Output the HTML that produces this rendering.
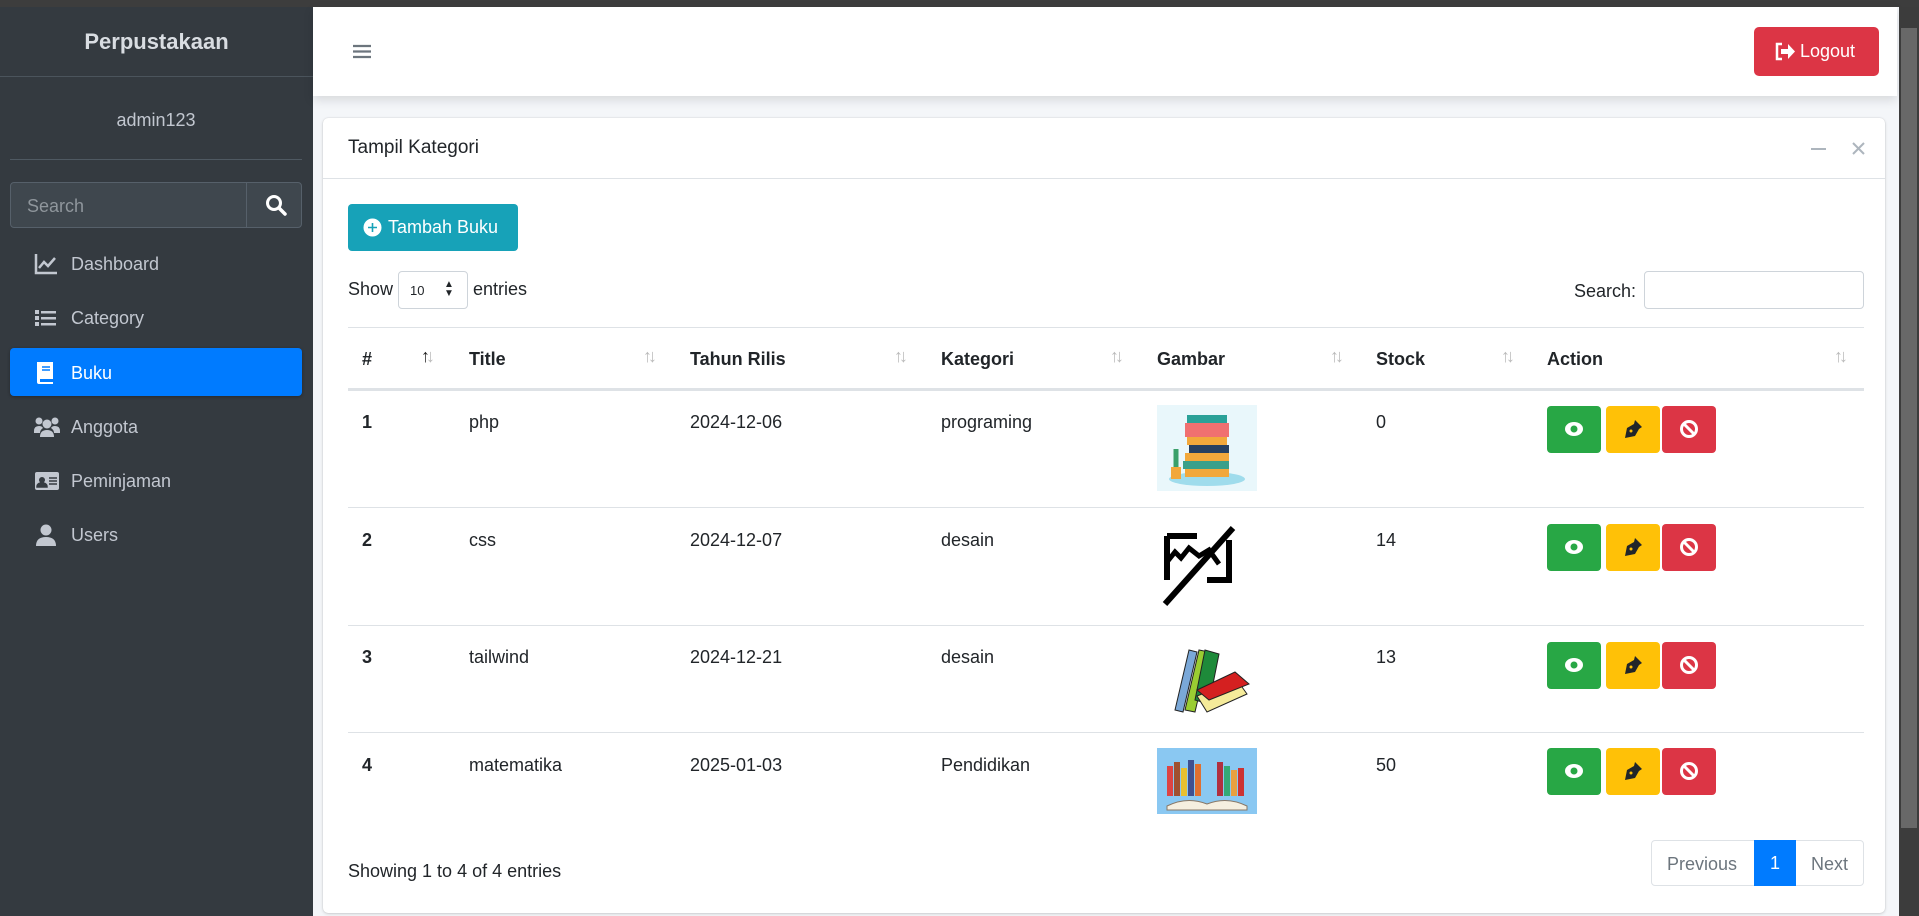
<!DOCTYPE html>
<html><head><meta charset="utf-8"><style>
*{box-sizing:border-box;margin:0;padding:0}
body{width:1919px;height:916px;overflow:hidden;background:#f4f6f9;font-family:"Liberation Sans",sans-serif;font-size:18px;color:#212529;position:relative}
.abs{position:absolute}
.topbar{left:0;top:0;width:1919px;height:7px;background:#3d3d3d}
.side{left:0;top:7px;width:313px;height:909px;background:#343a40;color:#c2c7d0}
.brand{position:absolute;left:0;top:0;width:313px;height:70px;border-bottom:1px solid #4b545c;text-align:center;line-height:70px;font-weight:bold;font-size:22px;color:#d9dde2}
.user{position:absolute;left:10px;top:78px;width:292px;height:75px;border-bottom:1px solid #4f5962;text-align:center;line-height:70px;font-size:18px;color:#c2c7d0}
.search{position:absolute;left:10px;top:175px;width:292px;height:46px;border:1px solid #56606a;border-radius:4px;background:#3f474e}
.search span{position:absolute;left:16px;top:13px;color:#8f969c}
.search .b{position:absolute;left:235px;top:0;width:1px;height:44px;background:#56606a}
.nav{position:absolute;left:10px;width:292px;height:48px;border-radius:4px;color:#c2c7d0;font-size:18px}
.nav svg{position:absolute;left:24px;top:14px}
.nav span{position:absolute;left:61px;top:15px}
.nav.act{background:#007bff;color:#fff;box-shadow:0 1px 3px rgba(0,0,0,.3)}
.header{left:313px;top:7px;width:1584px;height:89px;background:#fff;box-shadow:0 4px 10px rgba(0,0,0,.12)}
.logout{position:absolute;left:1441px;top:20px;width:125px;height:49px;background:#dc3545;border-radius:5px;color:#fff;font-size:18px;line-height:49px;padding-left:46px}
.scroll{left:1899px;top:7px;width:20px;height:909px;background:#3c3c3c}
.card{left:323px;top:118px;width:1562px;height:795px;background:#fff;border-radius:5px;box-shadow:0 0 1px rgba(0,0,0,.2),0 1px 3px rgba(0,0,0,.15)}
.ch{position:absolute;left:0;top:0;width:100%;height:61px;border-bottom:1px solid #dee2e6}
.btn-t{left:348px;top:204px;width:170px;height:47px;background:#17a2b8;border-radius:4px;color:#fff;line-height:47px;padding-left:40px}
.th{position:absolute;top:349px;font-weight:bold;font-size:18px}
.arr{position:absolute;top:346px;color:#bbb;font-size:18px;font-weight:bold;letter-spacing:-4px}
.td{position:absolute;font-size:18px}
.hl{position:absolute;left:348px;width:1516px;height:1px;background:#dee2e6}
.ab{position:absolute;width:54px;height:47px;border-radius:4px}
.ab svg{position:absolute;left:17px;top:13px}
</style></head><body>
<div class="abs topbar"></div>
<div class="abs side">
 <div class="brand">Perpustakaan</div>
 <div class="user">admin123</div>
 <div class="search"><span>Search</span><div class="b"></div>
  <svg style="position:absolute;left:254px;top:11px" width="22" height="22" viewBox="0 0 22 22"><circle cx="9" cy="9" r="6.5" fill="none" stroke="#fff" stroke-width="3"/><path d="M14 14l6 6" stroke="#fff" stroke-width="3.5" stroke-linecap="round"/></svg></div>
 <div class="nav" style="top:232px"><svg width="24" height="22"><path d="M2 1v19h21" fill="none" stroke="#c2c7d0" stroke-width="2.5"/><path d="M5 15l5-6 4 4 7-8" fill="none" stroke="#c2c7d0" stroke-width="2.5"/></svg><span>Dashboard</span></div>
 <div class="nav" style="top:286px"><svg width="24" height="22"><g fill="#c2c7d0"><rect x="1" y="3" width="4" height="4"/><rect x="1" y="9" width="4" height="4"/><rect x="1" y="15" width="4" height="4"/><rect x="7" y="4" width="15" height="2.5"/><rect x="7" y="10" width="15" height="2.5"/><rect x="7" y="16" width="15" height="2.5"/></g></svg><span>Category</span></div>
 <div class="nav act" style="top:341px"><svg width="24" height="22"><path d="M3 0h16v17H6v3h13v2H5a2 2 0 0 1-2-2z" fill="#fff"/><path d="M8 5h8M8 8h8" stroke="#007bff" stroke-width="1.5"/></svg><span>Buku</span></div>
 <div class="nav" style="top:395px"><svg width="26" height="22"><g fill="#c2c7d0"><circle cx="5" cy="5" r="3.5"/><circle cx="21" cy="5" r="3.5"/><circle cx="13" cy="8" r="4.5"/><path d="M0 15q0-5 5-5 3 0 4 2-3 2-3 5H0zM26 15q0-5-5-5-3 0-4 2 3 2 3 5h6zM6 21q0-7 7-7t7 7z"/></g></svg><span>Anggota</span></div>
 <div class="nav" style="top:449px"><svg width="26" height="22"><rect x="1" y="2" width="24" height="18" rx="2" fill="#c2c7d0"/><circle cx="8" cy="10" r="3" fill="#343a40"/><path d="M3 17q0-4 5-4t5 4z M15 8h8M15 11h8M15 14h8" fill="#343a40" stroke="#343a40" stroke-width="1.5"/></svg><span>Peminjaman</span></div>
 <div class="nav" style="top:503px"><svg width="24" height="22"><circle cx="12" cy="6" r="5.5" fill="#c2c7d0"/><path d="M2 22q0-9 10-9t10 9z" fill="#c2c7d0"/></svg><span>Users</span></div>
</div>
<div class="abs header">
 <svg style="position:absolute;left:40px;top:37px" width="18" height="15"><path d="M0 2h18M0 7.5h18M0 13h18" stroke="#6c757d" stroke-width="2.2"/></svg>
 <div class="logout"><svg style="position:absolute;left:20px;top:15px" width="22" height="19"><path d="M8 2H3v15h5" fill="none" stroke="#fff" stroke-width="2.5"/><path d="M7 7h7V2l7 7.5-7 7.5v-5H7z" fill="#fff"/></svg>Logout</div>
</div>
<div class="abs scroll"><div style="position:absolute;left:2px;top:21px;width:16px;height:800px;background:#686868"></div></div>
<div class="abs card">
 <div class="ch"><span style="position:absolute;left:25px;top:19px;font-size:19px">Tampil Kategori</span>
  <div style="position:absolute;left:1488px;top:30px;width:15px;height:2px;background:#adb5bd"></div>
  <svg style="position:absolute;left:1529px;top:24px" width="13" height="13"><path d="M1 1l11 11M12 1L1 12" stroke="#adb5bd" stroke-width="2"/></svg></div>
</div>
<div class="abs btn-t"><svg style="position:absolute;left:15px;top:14px" width="19" height="19"><circle cx="9.5" cy="9.5" r="9" fill="#fff"/><path d="M9.5 5v9M5 9.5h9" stroke="#17a2b8" stroke-width="1.6"/></svg>Tambah Buku</div>
<div class="abs" style="left:348px;top:279px">Show</div>
<div class="abs" style="left:398px;top:271px;width:70px;height:38px;border:1px solid #ced4da;border-radius:4px;background:#fff;font-size:13px;padding:11px 0 0 11px">10<span style="position:absolute;left:45px;top:8px;font-size:10px;line-height:9px">▲<br>▼</span></div>
<div class="abs" style="left:473px;top:279px">entries</div>
<div class="abs" style="left:1574px;top:281px">Search:</div>
<div class="abs" style="left:1644px;top:271px;width:220px;height:38px;border:1px solid #ced4da;border-radius:4px;background:#fff"></div>
<div class="hl" style="top:327px"></div>
<div class="th" style="left:362px">#</div><div class="arr" style="left:421px;color:#222">↑<span style="color:#bbb">↓</span></div>
<div class="th" style="left:469px">Title</div><div class="arr" style="left:643px">↑↓</div>
<div class="th" style="left:690px">Tahun Rilis</div><div class="arr" style="left:894px">↑↓</div>
<div class="th" style="left:941px">Kategori</div><div class="arr" style="left:1110px">↑↓</div>
<div class="th" style="left:1157px">Gambar</div><div class="arr" style="left:1330px">↑↓</div>
<div class="th" style="left:1376px">Stock</div><div class="arr" style="left:1501px">↑↓</div>
<div class="th" style="left:1547px">Action</div><div class="arr" style="left:1834px">↑↓</div>
<div class="hl" style="top:388px;height:3px"></div>

<div class="td" style="left:362px;top:412px;font-weight:bold">1</div><div class="td" style="left:469px;top:412px">php</div><div class="td" style="left:690px;top:412px">2024-12-06</div><div class="td" style="left:941px;top:412px">programing</div><div class="td" style="left:1376px;top:412px">0</div>
<div class="hl" style="top:507px"></div>
<div class="td" style="left:362px;top:530px;font-weight:bold">2</div><div class="td" style="left:469px;top:530px">css</div><div class="td" style="left:690px;top:530px">2024-12-07</div><div class="td" style="left:941px;top:530px">desain</div><div class="td" style="left:1376px;top:530px">14</div>
<div class="hl" style="top:625px"></div>
<div class="td" style="left:362px;top:647px;font-weight:bold">3</div><div class="td" style="left:469px;top:647px">tailwind</div><div class="td" style="left:690px;top:647px">2024-12-21</div><div class="td" style="left:941px;top:647px">desain</div><div class="td" style="left:1376px;top:647px">13</div>
<div class="hl" style="top:732px"></div>
<div class="td" style="left:362px;top:755px;font-weight:bold">4</div><div class="td" style="left:469px;top:755px">matematika</div><div class="td" style="left:690px;top:755px">2025-01-03</div><div class="td" style="left:941px;top:755px">Pendidikan</div><div class="td" style="left:1376px;top:755px">50</div>

<svg class="abs" style="left:1157px;top:405px" width="100" height="86"><rect width="100" height="86" fill="#e9f7fb"/><ellipse cx="50" cy="74" rx="38" ry="7" fill="#9fdcec"/><rect x="30" y="10" width="40" height="8" fill="#2aa198"/><rect x="28" y="18" width="44" height="14" fill="#f07070"/><rect x="30" y="32" width="40" height="8" fill="#f2a83b"/><rect x="32" y="40" width="40" height="8" fill="#274060"/><rect x="28" y="48" width="44" height="8" fill="#f2a83b"/><rect x="26" y="56" width="46" height="8" fill="#3aa08a"/><rect x="28" y="64" width="44" height="8" fill="#f2a83b"/><rect x="14" y="62" width="10" height="12" fill="#f2a83b"/><path d="M19 62v-18" stroke="#3aa06a" stroke-width="5"/></svg>
<svg class="abs" style="left:1157px;top:524px" width="100" height="86"><path d="M10 12h30M10 12v44M50 56h22V16" fill="none" stroke="#000" stroke-width="6"/><path d="M10 38l8-10 6 6 8-10 10 8 10-6 10 14" fill="none" stroke="#000" stroke-width="5"/><path d="M76 4L8 80" stroke="#000" stroke-width="6"/></svg>
<svg class="abs" style="left:1157px;top:640px" width="100" height="80"><path d="M18 70l14-60 8 2-14 60z" fill="#7aa8d8" stroke="#222"/><path d="M28 70l14-60 10 2-14 60z" fill="#9acd32" stroke="#222"/><path d="M38 60l10-50 14 4-10 50z" fill="#1e8a3a" stroke="#222"/><path d="M40 56l40-16 10 14-40 18z" fill="#f5eb9a" stroke="#222"/><path d="M40 50l38-18 14 12-40 16z" fill="#d42020" stroke="#222"/></svg>
<svg class="abs" style="left:1157px;top:748px" width="100" height="66"><rect width="100" height="66" fill="#8ac8f2"/><g><rect x="10" y="18" width="6" height="30" fill="#d44"/><rect x="17" y="14" width="6" height="34" fill="#a05030"/><rect x="24" y="20" width="6" height="28" fill="#e8c030"/><rect x="31" y="12" width="6" height="36" fill="#405090"/><rect x="38" y="16" width="6" height="32" fill="#e07030"/><rect x="60" y="14" width="6" height="34" fill="#b03040"/><rect x="67" y="18" width="6" height="30" fill="#3a7"/><rect x="74" y="22" width="6" height="26" fill="#e8a040"/><rect x="81" y="20" width="6" height="28" fill="#c33"/></g><path d="M10 58q20-10 40-2 20-8 40 2v4H10z" fill="#f5efe0" stroke="#876"/></svg>

<div class="ab" style="left:1547px;top:406px;background:#28a745"><svg width="20" height="20"><ellipse cx="10" cy="10" rx="9" ry="7" fill="#fff"/><circle cx="10" cy="10" r="3.5" fill="#28a745"/></svg></div>
<div class="ab" style="left:1606px;top:406px;background:#ffc107"><svg width="20" height="20"><path d="M12 1l7 7-3 2-4 7-10 2 2-10 7-4z" fill="#212529"/><circle cx="8" cy="12" r="1.5" fill="#ffc107"/></svg></div>
<div class="ab" style="left:1662px;top:406px;background:#dc3545"><svg width="20" height="20"><circle cx="10" cy="10" r="7.5" fill="none" stroke="#fff" stroke-width="3"/><path d="M5 5l10 10" stroke="#fff" stroke-width="3"/></svg></div>
<div class="ab" style="left:1547px;top:524px;background:#28a745"><svg width="20" height="20"><ellipse cx="10" cy="10" rx="9" ry="7" fill="#fff"/><circle cx="10" cy="10" r="3.5" fill="#28a745"/></svg></div>
<div class="ab" style="left:1606px;top:524px;background:#ffc107"><svg width="20" height="20"><path d="M12 1l7 7-3 2-4 7-10 2 2-10 7-4z" fill="#212529"/><circle cx="8" cy="12" r="1.5" fill="#ffc107"/></svg></div>
<div class="ab" style="left:1662px;top:524px;background:#dc3545"><svg width="20" height="20"><circle cx="10" cy="10" r="7.5" fill="none" stroke="#fff" stroke-width="3"/><path d="M5 5l10 10" stroke="#fff" stroke-width="3"/></svg></div>
<div class="ab" style="left:1547px;top:642px;background:#28a745"><svg width="20" height="20"><ellipse cx="10" cy="10" rx="9" ry="7" fill="#fff"/><circle cx="10" cy="10" r="3.5" fill="#28a745"/></svg></div>
<div class="ab" style="left:1606px;top:642px;background:#ffc107"><svg width="20" height="20"><path d="M12 1l7 7-3 2-4 7-10 2 2-10 7-4z" fill="#212529"/><circle cx="8" cy="12" r="1.5" fill="#ffc107"/></svg></div>
<div class="ab" style="left:1662px;top:642px;background:#dc3545"><svg width="20" height="20"><circle cx="10" cy="10" r="7.5" fill="none" stroke="#fff" stroke-width="3"/><path d="M5 5l10 10" stroke="#fff" stroke-width="3"/></svg></div>
<div class="ab" style="left:1547px;top:748px;background:#28a745"><svg width="20" height="20"><ellipse cx="10" cy="10" rx="9" ry="7" fill="#fff"/><circle cx="10" cy="10" r="3.5" fill="#28a745"/></svg></div>
<div class="ab" style="left:1606px;top:748px;background:#ffc107"><svg width="20" height="20"><path d="M12 1l7 7-3 2-4 7-10 2 2-10 7-4z" fill="#212529"/><circle cx="8" cy="12" r="1.5" fill="#ffc107"/></svg></div>
<div class="ab" style="left:1662px;top:748px;background:#dc3545"><svg width="20" height="20"><circle cx="10" cy="10" r="7.5" fill="none" stroke="#fff" stroke-width="3"/><path d="M5 5l10 10" stroke="#fff" stroke-width="3"/></svg></div>

<div class="abs" style="left:348px;top:861px">Showing 1 to 4 of 4 entries</div>
<div class="abs" style="left:1651px;top:840px;width:213px;height:46px;border:1px solid #dee2e6;border-radius:4px;background:#fff;color:#6c757d">
 <span style="position:absolute;left:15px;top:13px">Previous</span>
 <div style="position:absolute;left:102px;top:-1px;width:42px;height:46px;background:#007bff;color:#fff;text-align:center;line-height:46px">1</div>
 <span style="position:absolute;left:159px;top:13px">Next</span>
</div>
</body></html>
